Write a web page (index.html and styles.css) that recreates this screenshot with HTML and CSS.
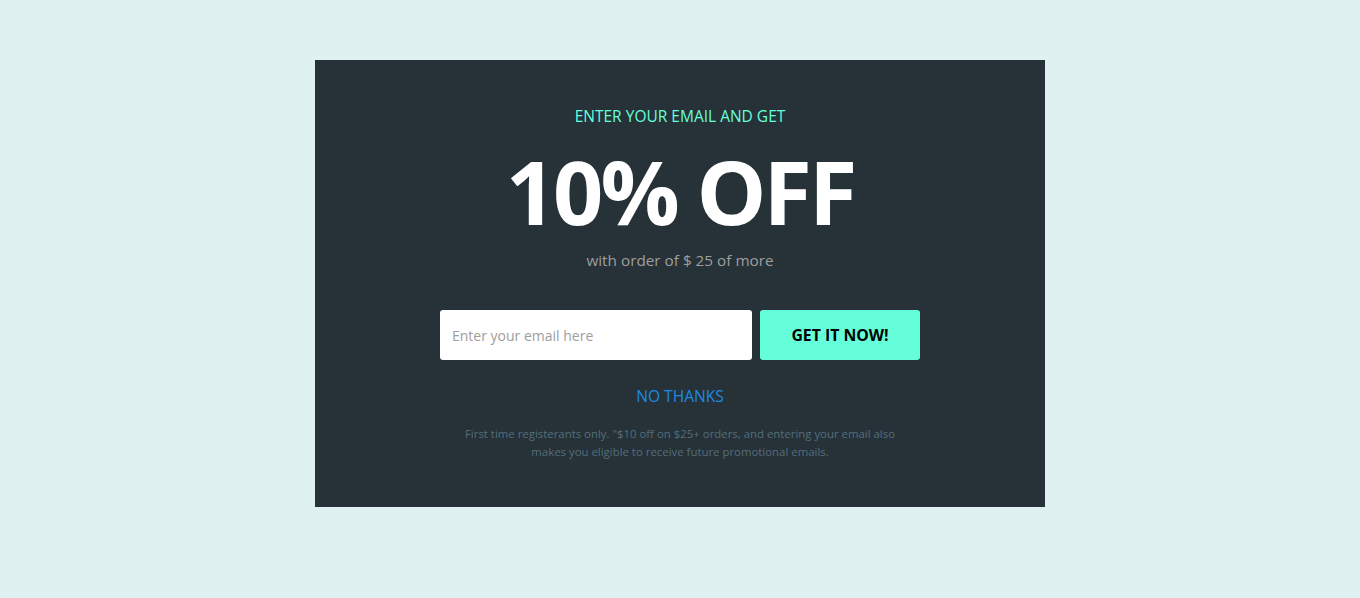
FILE: index.html
```html
<!DOCTYPE html>
<html>
<head>
<meta charset="utf-8">
<link rel="stylesheet" href="styles.css">
</head>
<body>
<div class="page">
  <div class="card">
    <p class="eyebrow">ENTER YOUR EMAIL AND GET</p>
    <h1 class="headline">10% OFF</h1>
    <p class="sub">with order of $ 25 of more</p>
    <form class="form">
      <input class="email" type="text" placeholder="Enter your email here">
      <button class="cta" type="button">GET IT NOW!</button>
    </form>
    <a class="nothanks" href="#">NO THANKS</a>
    <p class="fine">First time registerants only. "$10 off on $25+ orders, and entering your email also makes you eligible to receive future promotional emails.</p>
  </div>
</div>
</body>
</html>
```
FILE: styles.css
```css
html, body {
  margin: 0;
  padding: 0;
  background: #e0f1f1;
  font-family: "Open Sans", "Noto Sans", sans-serif;
}
.page {
  display: flex;
  justify-content: center;
  padding-top: 60px;
}
.card {
  width: 730px;
  height: 447px;
  box-sizing: border-box;
  background: #263238;
  display: flex;
  flex-direction: column;
  align-items: center;
  padding-top: 45px;
}
.eyebrow {
  margin: 0;
  color: #64ffda;
  font-size: 15.5px;
  line-height: 22px;
}
.headline {
  margin: 0;
  margin-top: 14px;
  color: #ffffff;
  font-size: 88px;
  font-weight: 700;
  line-height: 100px;
  letter-spacing: -3px;
}
.sub {
  margin: 0;
  margin-top: 8px;
  color: #9e9e9e;
  font-size: 15.3px;
  line-height: 22px;
}
.form {
  display: flex;
  gap: 8px;
  margin-top: 39px;
}
.email {
  width: 312px;
  height: 50px;
  box-sizing: border-box;
  border: none;
  border-radius: 3px;
  padding: 0 12px;
  font-family: inherit;
  font-size: 14px;
  outline: none;
}
.email::placeholder {
  color: #9e9e9e;
}
.cta {
  width: 160px;
  height: 50px;
  border: none;
  border-radius: 3px;
  background: #64ffda;
  color: #000;
  font-family: inherit;
  font-weight: 700;
  font-size: 15.8px;
}
.nothanks {
  margin-top: 25px;
  color: #1e88e5;
  text-decoration: none;
  font-size: 15.6px;
  line-height: 22px;
}
.fine {
  margin: 0;
  margin-top: 18px;
  width: 450px;
  text-align: center;
  color: #546e7a;
  font-size: 11.4px;
  line-height: 18px;
}
```
